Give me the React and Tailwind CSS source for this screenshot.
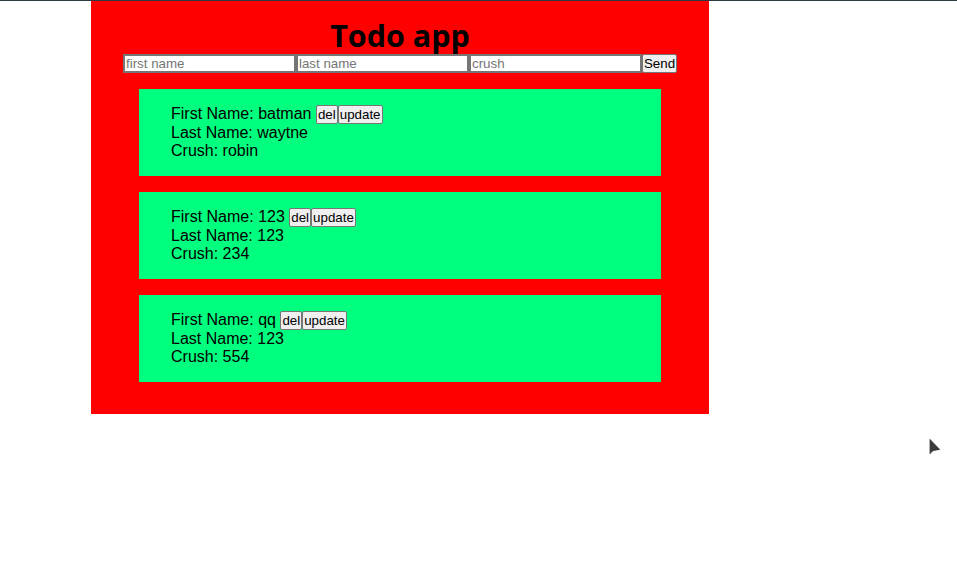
const todos = [
  { first: "batman", last: "waytne", crush: "robin" },
  { first: "123", last: "123", crush: "234" },
  { first: "qq", last: "123", crush: "554" },
];

function SmallButton({ children }) {
  return (
    <button className="inline-block align-baseline bg-[#efefef] border border-[#767676] rounded-[2px] px-[1px] py-[1px] text-[13.33px] leading-[15px] text-black font-['Liberation_Sans',Arial,sans-serif]">
      {children}
    </button>
  );
}

export default function App() {
  return (
    <div className="relative min-h-screen bg-white font-['Liberation_Sans',Arial,sans-serif]">
      <div className="h-px bg-[#2e3a3f]" />
      <div className="ml-[91px] w-[618px] bg-[#ff0000] pt-[15px] pb-[32px]">
        <h1 className="text-center text-[30.5px] leading-[38px] font-bold text-black font-['Open_Sans',sans-serif]">
          Todo app
        </h1>
        <div className="flex justify-center">
          {["first name", "last name", "crush"].map((p) => (
            <input
              key={p}
              placeholder={p}
              className="w-[173px] h-[19px] bg-white border-2 border-[#767676] pl-[1px] pr-0 text-[13.33px] text-black placeholder:text-[#757575] outline-none"
            />
          ))}
          <button className="h-[19px] w-[35px] bg-[#efefef] border border-[#767676] rounded-[2px] text-[13.33px] leading-[15px] text-black">
            Send
          </button>
        </div>
        <div className="mt-4 mx-12 flex flex-col gap-4">
          {todos.map((t, i) => (
            <div key={i} className="h-[87px] bg-[#00ff7f] px-8 pt-4 text-[16px] leading-[18.4px] text-black">
              <div>
                First Name: {t.first} <SmallButton>del</SmallButton>
                <SmallButton>update</SmallButton>
              </div>
              <div>Last Name: {t.last}</div>
              <div>Crush: {t.crush}</div>
            </div>
          ))}
        </div>
      </div>
      <svg
        className="absolute left-[927px] top-[435px]"
        width="18"
        height="26"
        viewBox="0 0 18 26"
      >
        <path d="M2 2 L2 21 L6.5 16.5 L14.5 15 Z" fill="#3c3c3c" stroke="#ffffff" strokeWidth="1.2" strokeLinejoin="round" />
      </svg>
    </div>
  );
}
